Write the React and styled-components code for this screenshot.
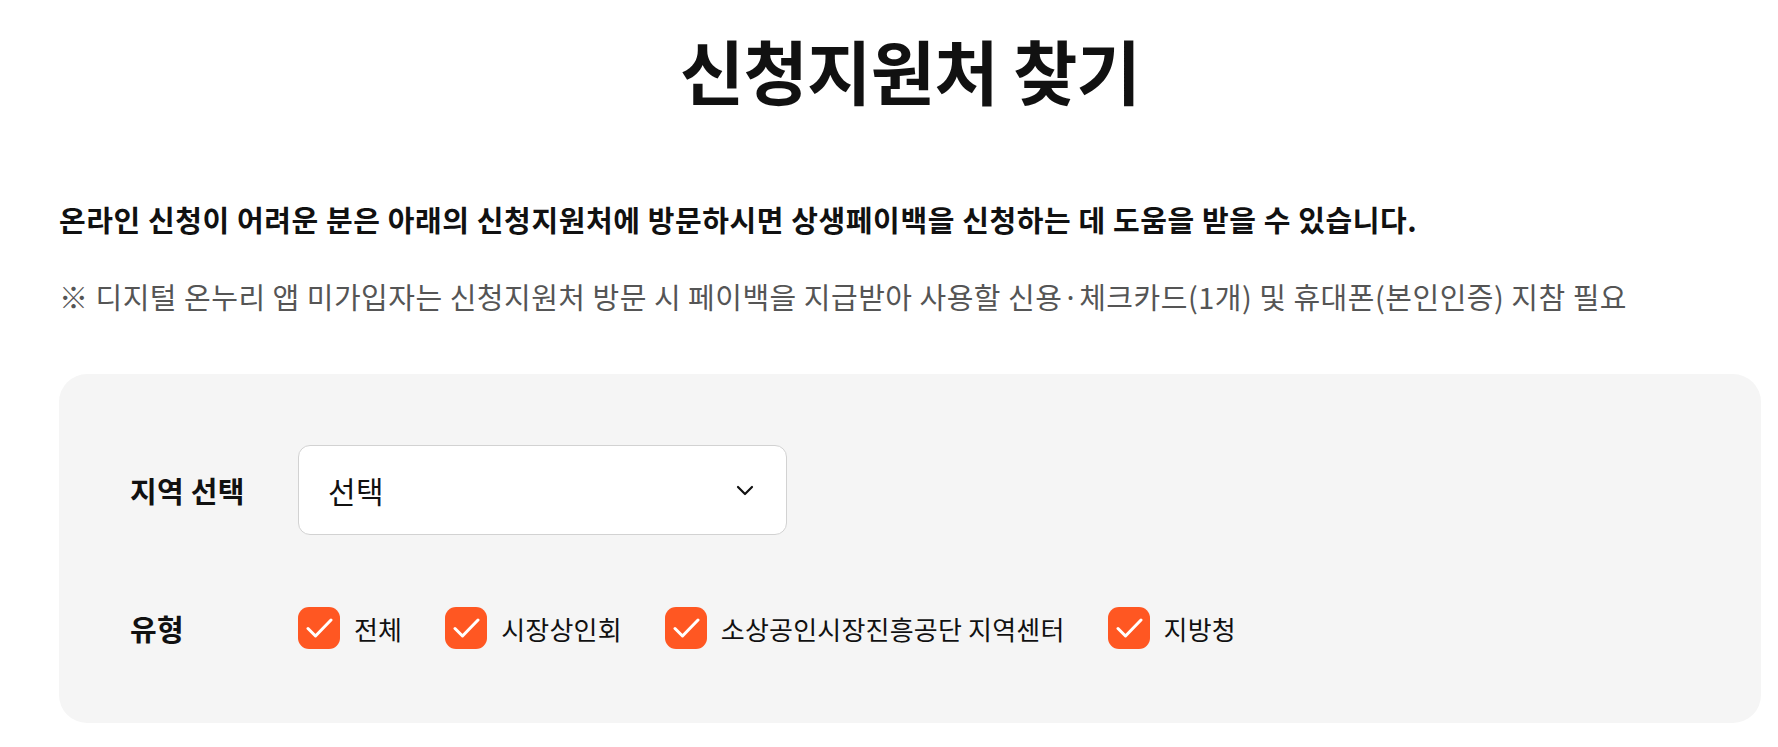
import React from "react";
import styled, { createGlobalStyle } from "styled-components";

const GlobalStyle = createGlobalStyle`
  html, body {
    margin: 0;
    padding: 0;
    background: #fff;
    font-family: "Noto Sans CJK KR", "Noto Sans", sans-serif;
    color: #111;
  }
`;

const Page = styled.div`
  width: 1702px;
  padding: 0 0 26px 59px;
`;

const Title = styled.h1`
  margin: 0;
  padding-top: 27px;
  text-align: center;
  font-size: 70px;
  line-height: 86px;
  font-weight: 700;
  letter-spacing: -0.8px;
  color: #111;
`;

const Lead = styled.p`
  margin: 86px 0 0;
  font-size: 29px;
  line-height: 40px;
  font-weight: 700;
  letter-spacing: 0.6px;
  color: #111;
`;

const Note = styled.p`
  margin: 37px 0 0;
  font-size: 29px;
  line-height: 40px;
  font-weight: 400;
  letter-spacing: 0.5px;
  color: #555;
`;

const Panel = styled.section`
  margin-top: 58px;
  background: #f5f5f5;
  border-radius: 28px;
  padding: 71px 71px 74px;
  display: grid;
  grid-template-columns: 168px 1fr;
  row-gap: 72px;
  align-items: center;
`;

const Label = styled.div`
  font-size: 29px;
  font-weight: 700;
  letter-spacing: 0.3px;
  color: #111;
`;

const Select = styled.button`
  width: 489px;
  height: 90px;
  box-sizing: border-box;
  display: flex;
  align-items: center;
  justify-content: space-between;
  padding: 0 30px 0 29px;
  background: #fff;
  border: 1px solid #d2d2d2;
  border-radius: 12px;
  font-family: inherit;
  font-size: 30px;
  letter-spacing: 0.3px;
  color: #111;
  cursor: pointer;
`;

const Options = styled.div`
  display: flex;
  align-items: center;
  gap: 43px;
`;

const Option = styled.label`
  display: flex;
  align-items: center;
  gap: 14px;
  font-size: 26px;
  letter-spacing: 0.2px;
  color: #111;
  cursor: pointer;
`;

const Box = styled.span`
  width: 42px;
  height: 42px;
  border-radius: 11px;
  background: ${(p) => (p.checked ? "#ff5722" : "#fff")};
  display: flex;
  align-items: center;
  justify-content: center;
`;

const types = ["전체", "시장상인회", "소상공인시장진흥공단 지역센터", "지방청"];

function Check() {
  return (
    <svg width="28" height="28" viewBox="0 0 28 28" fill="none">
      <path
        d="M3 14.5l7.5 7.5L26 6"
        stroke="#fff"
        strokeWidth="3"
        strokeLinecap="round"
        strokeLinejoin="round"
      />
    </svg>
  );
}

function Chevron() {
  return (
    <svg width="22" height="22" viewBox="0 0 22 22" fill="none">
      <path
        d="M4 8l7 7 7-7"
        stroke="#111"
        strokeWidth="2.2"
        strokeLinecap="round"
        strokeLinejoin="round"
      />
    </svg>
  );
}

export default function App() {
  return (
    <Page>
      <GlobalStyle />
      <Title>신청지원처 찾기</Title>
      <Lead>
        온라인 신청이 어려운 분은 아래의 신청지원처에 방문하시면 상생페이백을
        신청하는 데 도움을 받을 수 있습니다.
      </Lead>
      <Note>
        ※ 디지털 온누리 앱 미가입자는 신청지원처 방문 시 페이백을 지급받아
        사용할 신용·체크카드(1개) 및 휴대폰(본인인증) 지참 필요
      </Note>
      <Panel>
        <Label>지역 선택</Label>
        <div>
          <Select type="button">
            <span>선택</span>
            <Chevron />
          </Select>
        </div>
        <Label>유형</Label>
        <Options>
          {types.map((t) => (
            <Option key={t}>
              <Box checked>
                <Check />
              </Box>
              {t}
            </Option>
          ))}
        </Options>
      </Panel>
    </Page>
  );
}
